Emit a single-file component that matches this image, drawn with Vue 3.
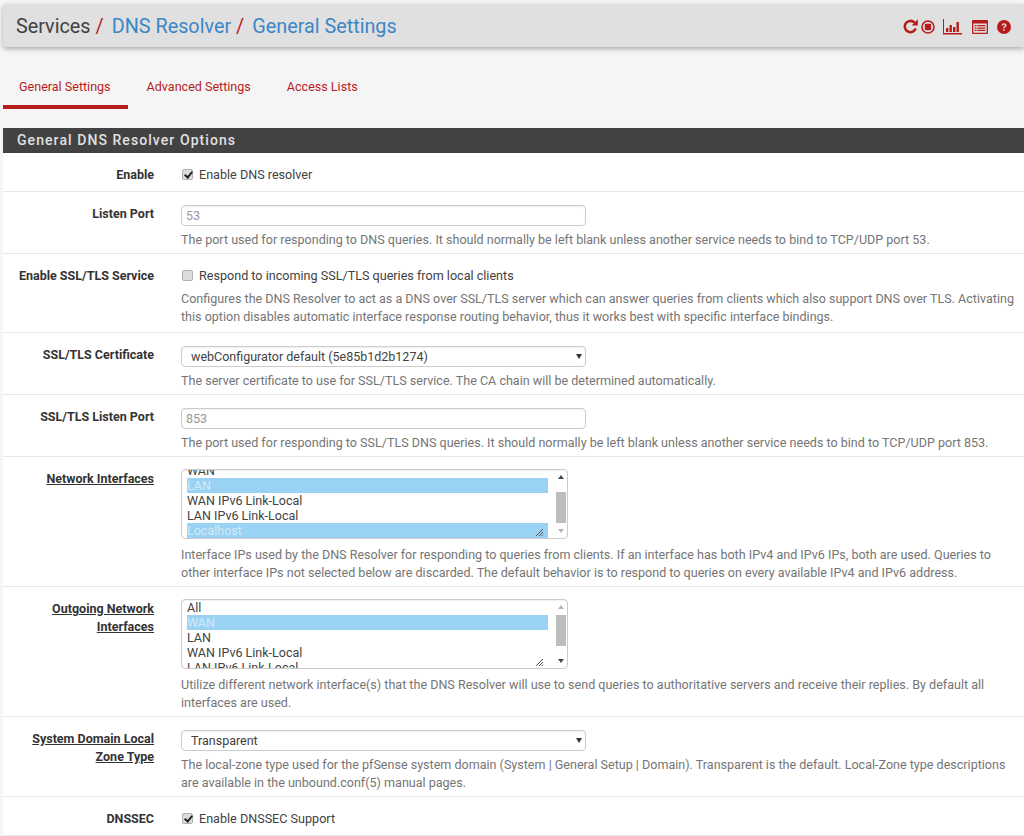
<template>
    <div class="page">
        <!-- BREADCRUMB BAR -->
        <header class="pageHeader">
            <h1 class="crumbs">
                <span>Services</span><i>/</i>
                <a>DNS Resolver</a><i>/</i>
                <a>General Settings</a>
            </h1>
            <div class="headerIcons">
                <svg class="icon iconRefresh" width="15" height="15" viewBox="0 0 16 16">
                    <path d="M12.300 3.900A6 6 0 1 0 13.600 10" fill="none" stroke="currentColor" stroke-width="2.700" />
                    <path d="M9.200 6.800L15.800 6.800V0.200z" fill="currentColor" />
                </svg>
                <svg class="icon" width="14" height="14" viewBox="0 0 14 14">
                    <circle cx="7" cy="7" r="6" fill="none" stroke="currentColor" stroke-width="1.600" />
                    <rect x="3.800" y="3.800" width="6.400" height="6.400" rx="1.400" fill="currentColor" />
                </svg>
                <svg class="icon iconChart" width="19" height="16" viewBox="0 0 19 16">
                    <path d="M0 0h1v14h18v1.600H0z" fill="currentColor" />
                    <path d="M3 9h2.400v4H3zM6.500 6h2.400v7H6.500zM10 8h2.400v5H10zM13.500 3h2.400v10h-2.400z" fill="currentColor" />
                </svg>
                <svg class="icon iconList" width="16" height="14" viewBox="0 0 16 14">
                    <path fill-rule="evenodd" fill="currentColor"
                        d="M1 0h14a1 1 0 0 1 1 1v12a1 1 0 0 1-1 1H1a1 1 0 0 1-1-1V1a1 1 0 0 1 1-1zM1.300 3.600v9.100h13.400V3.600z" />
                    <path d="M2.600 5h2v1.300h-2zM5.400 5h8v1.300h-8zM2.600 7.400h2v1.300h-2zM5.400 7.400h8v1.300h-8zM2.600 9.800h2v1.300h-2zM5.400 9.800h8v1.300h-8z" fill="currentColor" />
                </svg>
                <svg class="icon" width="14" height="14" viewBox="0 0 14 14">
                    <circle cx="7" cy="7" r="7" fill="currentColor" />
                    <path d="M4.600 5.400C4.800 4 5.800 3.200 7.100 3.200c1.400 0 2.400.9 2.400 2.100 0 1.800-1.900 1.700-1.900 3H6.200c0-2 1.800-2 1.800-3 0-.5-.4-.8-.9-.8-.6 0-1 .4-1.100 1z" fill="#e0e0e0" />
                    <rect x="6.200" y="9.200" width="1.500" height="1.500" fill="#e0e0e0" />
                </svg>
            </div>
        </header>

        <!-- TABS -->
        <nav class="tabs">
            <a class="tab active">General Settings</a>
            <a class="tab">Advanced Settings</a>
            <a class="tab">Access Lists</a>
        </nav>

        <section class="panel">
            <h2 class="panelTitle">General DNS Resolver Options</h2>

            <div class="row">
                <label class="rowLabel">Enable</label>
                <div class="rowBody">
                    <label class="check"><input type="checkbox" checked /> Enable DNS resolver</label>
                </div>
            </div>

            <div class="row">
                <label class="rowLabel">Listen Port</label>
                <div class="rowBody">
                    <input class="field" type="text" placeholder="53" />
                    <p class="help">The port used for responding to DNS queries. It should normally be left blank unless another service needs to bind to TCP/UDP port 53.</p>
                </div>
            </div>

            <div class="row">
                <label class="rowLabel">Enable SSL/TLS Service</label>
                <div class="rowBody">
                    <label class="check"><input type="checkbox" /> Respond to incoming SSL/TLS queries from local clients</label>
                    <p class="help">Configures the DNS Resolver to act as a DNS over SSL/TLS server which can answer queries from clients which also support DNS over TLS. Activating this option disables automatic interface response routing behavior, thus it works best with specific interface bindings.</p>
                </div>
            </div>

            <div class="row">
                <label class="rowLabel">SSL/TLS Certificate</label>
                <div class="rowBody">
                    <div class="selectWrap">
                        <select class="field">
                            <option>webConfigurator default (5e85b1d2b1274)</option>
                        </select>
                    </div>
                    <p class="help">The server certificate to use for SSL/TLS service. The CA chain will be determined automatically.</p>
                </div>
            </div>

            <div class="row">
                <label class="rowLabel">SSL/TLS Listen Port</label>
                <div class="rowBody">
                    <input class="field" type="text" placeholder="853" />
                    <p class="help">The port used for responding to SSL/TLS DNS queries. It should normally be left blank unless another service needs to bind to TCP/UDP port 853.</p>
                </div>
            </div>

            <div class="row">
                <label class="rowLabel underlined">Network Interfaces</label>
                <div class="rowBody">
                    <div class="listbox">
                        <ul class="options scrolled">
                            <li v-for="opt in networkInterfaces" :key="opt.name" :class="{ selected: opt.selected }">{{ opt.name }}</li>
                        </ul>
                        <div class="scrollbar">
                            <span class="arrow up"></span>
                            <span class="track"><span class="thumb thumbLow"></span></span>
                            <span class="arrow down faded"></span>
                        </div>
                        <svg class="grip" width="9" height="9" viewBox="0 0 9 9"><path d="M1 8l7-7M4 8l4-4M6.500 8L8 6.500" stroke="#555" stroke-width="1" /></svg>
                    </div>
                    <p class="help">Interface IPs used by the DNS Resolver for responding to queries from clients. If an interface has both IPv4 and IPv6 IPs, both are used. Queries to other interface IPs not selected below are discarded. The default behavior is to respond to queries on every available IPv4 and IPv6 address.</p>
                </div>
            </div>

            <div class="row">
                <label class="rowLabel underlined">Outgoing Network Interfaces</label>
                <div class="rowBody">
                    <div class="listbox">
                        <ul class="options">
                            <li v-for="opt in outgoingInterfaces" :key="opt.name" :class="{ selected: opt.selected }">{{ opt.name }}</li>
                        </ul>
                        <div class="scrollbar">
                            <span class="arrow up faded"></span>
                            <span class="track"><span class="thumb"></span></span>
                            <span class="arrow down"></span>
                        </div>
                        <svg class="grip" width="9" height="9" viewBox="0 0 9 9"><path d="M1 8l7-7M4 8l4-4M6.500 8L8 6.500" stroke="#555" stroke-width="1" /></svg>
                    </div>
                    <p class="help">Utilize different network interface(s) that the DNS Resolver will use to send queries to authoritative servers and receive their replies. By default all interfaces are used.</p>
                </div>
            </div>

            <div class="row">
                <label class="rowLabel underlined">System Domain Local Zone Type</label>
                <div class="rowBody">
                    <div class="selectWrap">
                        <select class="field">
                            <option>Transparent</option>
                        </select>
                    </div>
                    <p class="help">The local-zone type used for the pfSense system domain (System | General Setup | Domain). Transparent is the default. Local-Zone type descriptions are available in the unbound.conf(5) manual pages.</p>
                </div>
            </div>

            <div class="row">
                <label class="rowLabel">DNSSEC</label>
                <div class="rowBody">
                    <label class="check"><input type="checkbox" checked /> Enable DNSSEC Support</label>
                </div>
            </div>
        </section>
    </div>
</template>

<script setup>
const networkInterfaces = [
    { name: "WAN" },
    { name: "LAN", selected: true },
    { name: "WAN IPv6 Link-Local" },
    { name: "LAN IPv6 Link-Local" },
    { name: "Localhost", selected: true },
];

const outgoingInterfaces = [
    { name: "All" },
    { name: "WAN", selected: true },
    { name: "LAN" },
    { name: "WAN IPv6 Link-Local" },
    { name: "LAN IPv6 Link-Local" },
];
</script>

<style>
html,
body {
    overflow: hidden;
    background: #f5f5f5;
}
</style>

<style scoped>
.page {
    height: 836px;
    overflow: hidden;
    padding: 4px 0 0 3px;
    box-sizing: border-box;
    background: #f5f5f5;
    font-family: Roboto, sans-serif;
    font-size: 12.5px;
    color: #424242;
}

/* ----------------------- HEADER ----------------------- */
.pageHeader {
    display: flex;
    align-items: center;
    justify-content: space-between;
    box-sizing: border-box;
    height: 43px;
    padding: 2px 13px 0;
    background: #e0e0e0;
    border-radius: 4px 0 0 4px;
    box-shadow: 0 2px 5px rgba(0, 0, 0, 0.3);
}
.crumbs {
    margin: 0;
    font-size: 19.8px;
    font-weight: 400;
    color: #424242;
}
.crumbs i {
    font-style: normal;
    color: #b71c1c;
    margin: 0 8px 0 5px;
}
.crumbs a {
    color: #3b87c6;
}
.headerIcons {
    display: flex;
    align-items: center;
    gap: 3px;
    color: #b71c1c;
}
.iconChart {
    margin-left: 5px;
}
.iconList {
    margin-left: 7px;
}
.headerIcons .icon:last-child {
    margin-left: 6px;
}

/* ----------------------- TABS ----------------------- */
.tabs {
    display: flex;
    gap: 3px;
    height: 47px;
    margin-top: 15px;
    margin-bottom: 19px;
}
.tab {
    padding: 17px 17px 0 16px;
    height: 47px;
    box-sizing: border-box;
    color: #b71c1c;
    font-size: 12.55px;
}
.tab.active {
    border-bottom: 4px solid #b71c1c;
}

/* ----------------------- PANEL ----------------------- */
.panel {
    background: #fff;
}
.panelTitle {
    margin: 0;
    height: 25px;
    line-height: 25px;
    padding-left: 14px;
    background: #424242;
    color: #e0e0e0;
    font-size: 14px;
    font-weight: 500;
    letter-spacing: 1.07px;
}
.row {
    display: grid;
    grid-template-columns: 151px 1fr;
    column-gap: 27px;
    padding: 13px 9px 4px 0;
    border-bottom: 1px solid #e6e6e6;
}
.rowLabel {
    text-align: right;
    font-weight: 700;
    line-height: 18px;
    color: #333;
}
.underlined {
    text-decoration: underline;
}
.rowBody {
    min-width: 0;
}
.check {
    display: flex;
    align-items: center;
    box-sizing: border-box;
    height: 21px;
    padding-bottom: 5px;
    font-size: 12.6px;
    color: #424242;
}
.check input {
    appearance: none;
    position: relative;
    flex: none;
    width: 11px;
    height: 11px;
    margin: 0 6px 0 1px;
    background: #ddd;
    border: 1px solid #b0b0b0;
    border-radius: 2px;
}
.check input:checked::after {
    content: "";
    position: absolute;
    left: 2.5px;
    top: 0;
    width: 3px;
    height: 6px;
    border: solid #222;
    border-width: 0 2px 2px 0;
    transform: rotate(40deg);
}
.field {
    display: block;
    box-sizing: border-box;
    width: 405px;
    height: 21px;
    padding: 0 4px;
    border: 1px solid #ccc;
    border-radius: 4px;
    background: #fff;
    font-family: inherit;
    font-size: 12.5px;
    color: #424242;
    box-shadow: inset 0 1px 1px rgba(0, 0, 0, 0.06);
}
.field::placeholder {
    color: #999;
}
select.field {
    appearance: none;
    padding-left: 9px;
}
.selectWrap {
    position: relative;
    width: 405px;
}
.selectWrap::after {
    content: "";
    position: absolute;
    right: 4px;
    top: 8px;
    border: 3px solid transparent;
    border-top: 5px solid #333;
    border-bottom: 0;
    pointer-events: none;
}
.help {
    margin: 5px 0 0;
    font-size: 12.55px;
    line-height: 18px;
    color: #757575;
}
.check + .help {
    margin-top: 2px;
    padding-bottom: 2px;
}
.listbox + .help {
    margin-top: 7px;
}

/* ----------------------- LISTBOX ----------------------- */
.listbox {
    position: relative;
    display: flex;
    box-sizing: border-box;
    width: 387px;
    height: 70px;
    margin-top: -1px;
    border: 1px solid #ccc;
    border-radius: 4px;
    overflow: hidden;
    background: #fff;
    box-shadow: inset 0 1px 1px rgba(0, 0, 0, 0.06);
}
.options {
    flex: 1;
    list-style: none;
    margin: 0;
    padding: 0 7px 0 5px;
    line-height: 15px;
}
.options.scrolled {
    margin-top: -7px;
}
.options li {
    height: 15px;
    color: #424242;
}
.options li.selected {
    background: #99d2f3;
    color: #d3e9f7;
}
.scrollbar {
    display: flex;
    flex-direction: column;
    width: 12px;
    flex: none;
    align-items: center;
}
.arrow {
    flex: none;
    width: 0;
    height: 0;
    border: 0 solid transparent;
    border-left-width: 3.5px;
    border-right-width: 3.5px;
}
.arrow.up {
    border-bottom: 4px solid #444;
    border-top: 5px solid transparent;
    margin-bottom: 6px;
}
.arrow.down {
    border-top: 4px solid #444;
    border-bottom: 5px solid transparent;
    margin-top: 6px;
}
.arrow.faded.up {
    border-bottom-color: #b5b5b5;
}
.arrow.faded.down {
    border-top-color: #b5b5b5;
}
.track {
    flex: 1;
    width: 100%;
    background: #fff;
    display: flex;
    flex-direction: column;
    align-items: center;
}
.thumb {
    display: block;
    width: 10px;
    height: 31px;
    background: #bdbdbd;
}
.thumbLow {
    margin-top: 7px;
}
.grip {
    position: absolute;
    right: 23px;
    bottom: 1px;
}
</style>
